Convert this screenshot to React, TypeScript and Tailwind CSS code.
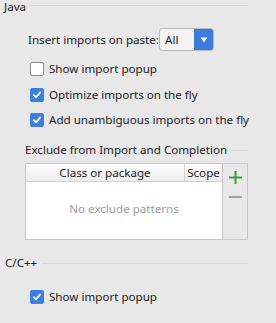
import React from "react";

const Check = ({ checked }: { checked: boolean }) =>
  checked ? (
    <div className="w-[14px] h-[14px] rounded-[2px] bg-[#3d7fdd] flex items-center justify-center shrink-0">
      <svg width="10" height="10" viewBox="0 0 10 10">
        <path d="M1.8 5.2 L4 7.4 L8.3 2.4" stroke="white" strokeWidth="1.8" fill="none" strokeLinecap="round" strokeLinejoin="round" />
      </svg>
    </div>
  ) : (
    <div className="w-[14px] h-[14px] rounded-[2px] bg-white border border-[#8a8a8a] shrink-0" />
  );

const CheckRow = ({ checked, label, className }: { checked: boolean; label: string; className: string }) => (
  <div className={"flex items-center h-[14px] pl-[30px] whitespace-nowrap " + className}>
    <Check checked={checked} />
    <span className="ml-[5px] leading-[16px]">{label}</span>
  </div>
);

export default function App() {
  return (
    <div
      className="w-[276px] h-[323px] bg-[#e8e8e8] text-[#1c1c1c] text-[11.6px] overflow-hidden whitespace-nowrap"
      style={{ fontFamily: '"Segoe UI", "Noto Sans", sans-serif' }}
    >
      <div className="flex items-start h-[12px]">
        <span className="ml-[4px] leading-[14px]">Java</span>
        <div className="flex-1 h-px bg-[#d6d6d6] mt-[5px] ml-[3px] mr-[28px]" />
      </div>

      <div className="flex items-center h-[23px] mt-[16px] pl-[28px]">
        <span className="leading-[16px]">Insert imports on paste:</span>
        <div className="ml-auto mr-[62px] w-[55px] h-[23px] flex rounded-[3px] border border-[#b9b9b9] bg-[#f4f4f4] overflow-hidden">
          <span className="flex-1 pl-[5px] leading-[21px]">All</span>
          <div className="w-[19px] bg-[#3d7bd8] flex items-center justify-center">
            <svg width="8" height="6" viewBox="0 0 8 6">
              <path d="M0.5 0.5 L7.5 0.5 L4 5.5 Z" fill="white" />
            </svg>
          </div>
        </div>
      </div>

      <CheckRow checked={false} label="Show import popup" className="mt-[11px]" />
      <CheckRow checked={true} label="Optimize imports on the fly" className="mt-[12px]" />
      <CheckRow checked={true} label="Add unambiguous imports on the fly" className="mt-[11px]" />

      <div className="flex items-center h-[16px] mt-[15px]">
        <span className="ml-[25px] leading-[16px]">Exclude from Import and Completion</span>
        <div className="flex-1 h-px bg-[#d6d6d6] ml-[4px] mr-[28px]" />
      </div>

      <div className="mt-[5px] ml-[25px] w-[223px] h-[77px] border border-[#c6c6c6] flex">
        <div className="flex-1 bg-white flex flex-col">
          <div className="h-[18px] flex border-b border-[#cfcfcf] bg-gradient-to-b from-[#ffffff] to-[#ececec]">
            <div className="w-[159px] text-center leading-[17px] border-r border-[#d2d2d2]">Class or package</div>
            <div className="flex-1 text-center leading-[17px]">Scope</div>
          </div>
          <div className="flex-1 flex items-center justify-center text-[#9b9b9b] pb-[4px]">No exclude patterns</div>
        </div>
        <div className="w-[25px] border-l border-[#c6c6c6] flex flex-col items-center">
          <svg width="13" height="13" viewBox="0 0 13 13" className="mt-[7px]">
            <rect x="5.5" y="0" width="2" height="13" fill="#3d9a43" />
            <rect x="0" y="5.5" width="13" height="2" fill="#3d9a43" />
          </svg>
          <svg width="13" height="2" viewBox="0 0 13 2" className="mt-[12px]">
            <rect x="0" y="0" width="13" height="2" fill="#a0a0a0" />
          </svg>
        </div>
      </div>

      <div className="flex items-center h-[16px] mt-[15px]">
        <span className="ml-[5px] leading-[16px]">C/C++</span>
        <div className="flex-1 h-px bg-[#d6d6d6] ml-[4px] mr-[28px]" />
      </div>

      <CheckRow checked={true} label="Show import popup" className="mt-[19px]" />
    </div>
  );
}
